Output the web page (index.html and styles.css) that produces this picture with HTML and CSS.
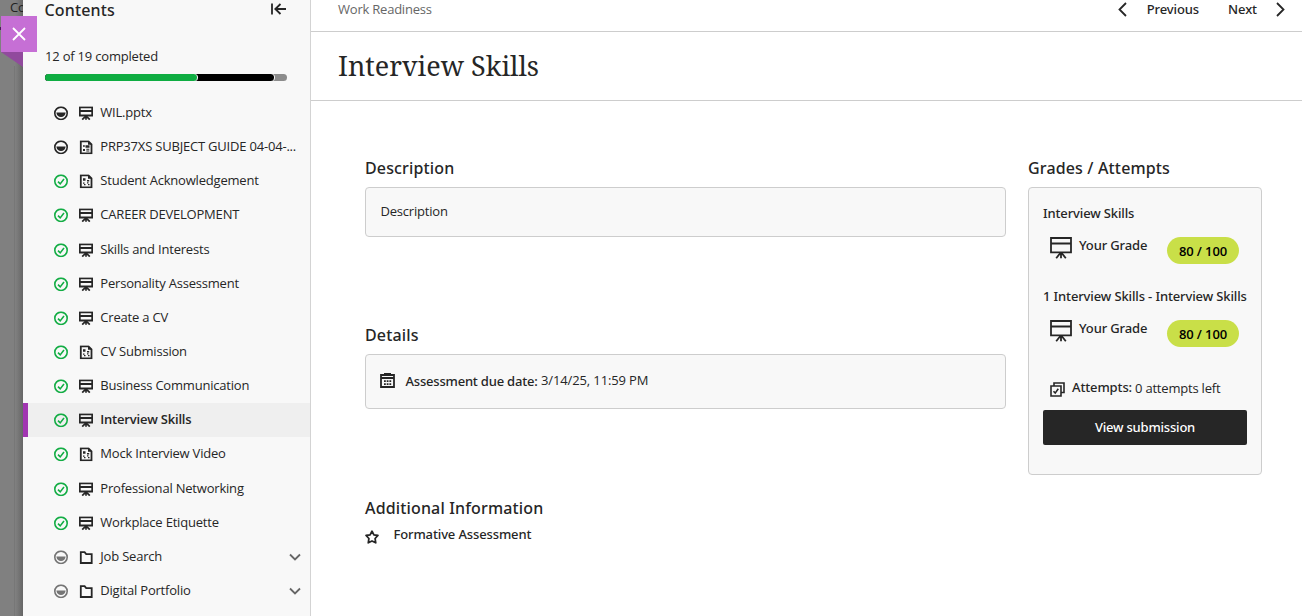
FILE: index.html
```
<!DOCTYPE html>
<html lang="en">
<head>
<meta charset="utf-8">
<title>Interview Skills</title>
<link rel="stylesheet" href="styles.css">
</head>
<body>
<svg class="defs" width="0" height="0" aria-hidden="true">
  <symbol id="done" viewBox="0 0 14 14"><circle cx="7" cy="7" r="6.2" fill="none" stroke="#14ad45" stroke-width="1.6"/><path d="M4 7.3 6.2 9.6 10 4.7" fill="none" stroke="#14ad45" stroke-width="1.6"/></symbol>
  <symbol id="half" viewBox="0 0 14 14"><circle cx="7" cy="7" r="6.2" fill="none" stroke="currentColor" stroke-width="1.6"/><path d="M2.4 6.2h9.2a4.6 4.6 0 0 1-9.2 0z" fill="currentColor"/></symbol>
  <symbol id="board" viewBox="0 0 14 14"><path d="M.8 1h12.4v8.2H.8zM.8 4.7h12.4" fill="none" stroke="currentColor" stroke-width="1.8"/><path d="M7 9v4.5M6.5 10 3.2 13.4M7.5 10l3.3 3.4" fill="none" stroke="currentColor" stroke-width="1.7"/></symbol>
  <symbol id="doc" viewBox="0 0 14 14"><path d="M1.8 1h7.7l3 3v9H1.8z" fill="none" stroke="currentColor" stroke-width="1.8"/><path d="M9 1v3.5h3.5z" fill="currentColor"/><path d="M4 5h1.8v1.5H4zM6.5 5h4v2.4h-4zM4 8.6h2v2.2H4zM7.3 8.5h3v1h-3zM7.3 10.2h3v1h-3z" fill="currentColor"/></symbol>
  <symbol id="test" viewBox="0 0 14 14"><path d="M1.8 1h7.7l3 3v9H1.8z" fill="none" stroke="currentColor" stroke-width="1.8"/><path d="M9 1v3.5h3.5z" fill="currentColor"/><path d="M4 4h2.5v2.5H4zM8 5.6h2.2v1.6H8zM4 8.2h1.5v1.3H4zM5 9.6h1.5V11H5zM8 8h1.5v1.3H8zM9 9.8h1.5V11H9z" fill="currentColor"/></symbol>
  <symbol id="folder" viewBox="0 0 14 14"><path d="M1.8 1.8h3.8l1.6 2h5.5v8.9H1.8z" fill="none" stroke="currentColor" stroke-width="1.8"/></symbol>
  <symbol id="chev" viewBox="0 0 12 8"><path d="M1 1.5 6 6.5l5-5" fill="none" stroke="#666" stroke-width="1.8"/></symbol>
  <symbol id="easel" viewBox="0 0 22 22"><path d="M1 1h20v14.4H1zM1 6.5h20" fill="none" stroke="currentColor" stroke-width="1.8"/><path d="M11 15v6.2M10.3 16 6.2 21.2M11.7 16l4.1 5.2" fill="none" stroke="currentColor" stroke-width="1.8"/></symbol>
</svg>

<div class="app">
  <div class="backdrop"><span class="behind-title">Co</span><span class="behind-mark"></span><span class="behind-line"></span>
  </div>
  <button class="close" aria-label="Close"><svg width="14" height="14" viewBox="0 0 14 14"><path d="M1 1l12 12M13 1 1 13" stroke="#fff" stroke-width="1.8" fill="none"/></svg></button>
  <span class="fold"></span>

  <aside class="sidebar">
    <header class="side-head">
      <h2>Contents</h2>
      <svg width="15" height="12" viewBox="0 0 15 12"><path d="M1 .5v11M4.5 6H15M9.5 1 4.3 6l5.2 5" fill="none" stroke="#262626" stroke-width="1.8"/></svg>
    </header>
    <p class="count">12 of 19 completed</p>
    <div class="bar"><span class="bar-left"></span><span class="bar-started"></span><span class="bar-done"></span></div>
    <ul class="items">
      <li><svg class="st"><use href="#half"/></svg><svg class="ty"><use href="#board"/></svg><span>WIL.pptx</span></li>
      <li><svg class="st"><use href="#half"/></svg><svg class="ty"><use href="#doc"/></svg><span>PRP37XS SUBJECT GUIDE 04-04-...</span></li>
      <li><svg class="st"><use href="#done"/></svg><svg class="ty"><use href="#test"/></svg><span>Student Acknowledgement</span></li>
      <li><svg class="st"><use href="#done"/></svg><svg class="ty"><use href="#board"/></svg><span>CAREER DEVELOPMENT</span></li>
      <li><svg class="st"><use href="#done"/></svg><svg class="ty"><use href="#board"/></svg><span>Skills and Interests</span></li>
      <li><svg class="st"><use href="#done"/></svg><svg class="ty"><use href="#board"/></svg><span>Personality Assessment</span></li>
      <li><svg class="st"><use href="#done"/></svg><svg class="ty"><use href="#board"/></svg><span>Create a CV</span></li>
      <li><svg class="st"><use href="#done"/></svg><svg class="ty"><use href="#test"/></svg><span>CV Submission</span></li>
      <li><svg class="st"><use href="#done"/></svg><svg class="ty"><use href="#board"/></svg><span>Business Communication</span></li>
      <li class="active"><svg class="st"><use href="#done"/></svg><svg class="ty"><use href="#board"/></svg><span>Interview Skills</span></li>
      <li><svg class="st"><use href="#done"/></svg><svg class="ty"><use href="#test"/></svg><span>Mock Interview Video</span></li>
      <li><svg class="st"><use href="#done"/></svg><svg class="ty"><use href="#board"/></svg><span>Professional Networking</span></li>
      <li><svg class="st"><use href="#done"/></svg><svg class="ty"><use href="#board"/></svg><span>Workplace Etiquette</span></li>
      <li><svg class="st grey"><use href="#half"/></svg><svg class="ty"><use href="#folder"/></svg><span>Job Search</span><svg class="chev"><use href="#chev"/></svg></li>
      <li><svg class="st grey"><use href="#half"/></svg><svg class="ty"><use href="#folder"/></svg><span>Digital Portfolio</span><svg class="chev"><use href="#chev"/></svg></li>
    </ul>
  </aside>

  <main class="main">
    <nav class="topbar">
      <span class="crumb">Work Readiness</span>
      <svg width="9" height="15" viewBox="0 0 9 15"><path d="M8 1 1.5 7.5 8 14" fill="none" stroke="#262626" stroke-width="1.8"/></svg>
      <span class="prev">Previous</span>
      <span class="next">Next</span>
      <svg width="9" height="15" viewBox="0 0 9 15"><path d="M1 1l6.5 6.5L1 14" fill="none" stroke="#262626" stroke-width="1.8"/></svg>
    </nav>
    <h1 class="title">Interview Skills</h1>
    <div class="content">
      <div class="info">
        <h3>Description</h3>
        <div class="box description">Description</div>
        <h3>Details</h3>
        <div class="box details">
          <svg width="15" height="15" viewBox="0 0 15 15"><path d="M1 2h13v12H1zM1 5h13" fill="none" stroke="#262626" stroke-width="1.8"/><path d="M4 0h7v2H4zM4 7.3h1.8V9H4zM6.7 7.3h1.8V9H6.7zM9.4 7.3h1.8V9H9.4zM4 10.3h1.8V12H4zM6.7 10.3h1.8V12H6.7zM9.4 10.3h1.8V12H9.4z" fill="#262626"/></svg>
          <b>Assessment due date:</b><span>3/14/25, 11:59 PM</span>
        </div>
        <h3>Additional Information</h3>
        <div class="formative">
          <svg width="14" height="14" viewBox="0 0 14 14"><path d="M7 1.2 8.9 4.9l4 .6-2.8 3 .6 4.3L7 11 3.3 12.8l.6-4.3-2.8-3 4-.6z" fill="none" stroke="#262626" stroke-width="1.8" stroke-linejoin="round"/></svg>
          <b>Formative Assessment</b>
        </div>
      </div>
      <section class="grades">
        <h3>Grades / Attempts</h3>
        <div class="box grade-card">
          <b class="name">Interview Skills</b>
          <div class="grade"><svg width="22" height="22"><use href="#easel"/></svg><b>Your Grade</b><span class="pill">80 / 100</span></div>
          <b class="name second">1 Interview Skills - Interview Skills</b>
          <div class="grade"><svg width="22" height="22"><use href="#easel"/></svg><b>Your Grade</b><span class="pill">80 / 100</span></div>
          <div class="attempts">
            <svg width="15" height="15" viewBox="0 0 15 15"><path d="M4 4V1h10v9.5h-3M1 4h10v10H1z" fill="none" stroke="#262626" stroke-width="1.6"/><path d="M3.5 9.3l1.7 1.8 3.1-4.4" fill="none" stroke="#262626" stroke-width="1.6"/></svg>
            <b>Attempts:</b><span>0 attempts left</span>
          </div>
          <button class="view">View submission</button>
        </div>
      </section>
    </div>
  </main>
</div>
</body>
</html>
```
FILE: styles.css
```
* { box-sizing: border-box; margin: 0; padding: 0; }
body { height: 616px; overflow: hidden; background: #fff; color: #262626; font: 13px/18px "Open Sans", "Noto Sans", sans-serif; letter-spacing: -.2px; }
b { font-family: "Noto Sans", "Open Sans", sans-serif; font-weight: 500; letter-spacing: -.13px; }
button { border: 0; font: inherit; letter-spacing: inherit; }
svg { display: block; flex: none; }
.defs { position: absolute; }
.app { position: relative; display: grid; grid-template-columns: 23px 288px 1fr; height: 616px; }

.backdrop { position: relative; overflow: hidden; background: linear-gradient(90deg, #808080 0 15px, #7b7b7b 17px, #666 23px); }
.behind-title { position: absolute; left: 10px; top: -2px; font-size: 13px; color: #222; }
.behind-mark { position: absolute; left: 0; top: 27px; width: 2px; height: 3px; background: #4c1b57; }
.behind-line { position: absolute; left: 14px; top: 66px; width: 1px; height: 550px; background: #777; }
.close { position: absolute; left: 1px; top: 16px; width: 36px; height: 36px; display: grid; place-items: center; background: #c66fd5; z-index: 2; }
.fold { position: absolute; left: 1px; top: 52px; width: 22px; height: 15px; background: #914a9d; clip-path: polygon(0 0, 100% 0, 100% 100%); }

.sidebar { background: #f8f8f8; border-right: 1px solid #d3d3d3; }
.side-head { display: flex; align-items: flex-start; justify-content: space-between; height: 47px; padding: 0 24px 0 21.5px; }
.side-head h2 { font: 500 16px/20px "Noto Sans", "Open Sans", sans-serif; letter-spacing: .15px; }
.side-head svg { margin-top: 3px; }
.count { padding-left: 22px; }
.bar { display: grid; margin: 9px 0 14.8px 22px; width: 242px; height: 7px; }
.bar span { grid-area: 1 / 1; height: 7px; border-radius: 4px; }
.bar-left { width: 242px; background: #8c8c8c; }
.bar-started { width: 229px; background: #000; box-shadow: 1px 0 0 #f8f8f8; }
.bar-done { width: 152px; background: #0fad42; box-shadow: 1px 0 0 #f8f8f8; }
.items { list-style: none; }
.items li { display: flex; align-items: center; height: 34.17px; padding: 0 9px 0 31px; white-space: nowrap; }
.items span { margin-top: -2px; flex: 1; }
.st { width: 14px; height: 14px; margin-right: 11px; }
.grey { color: #757575; }
.ty { width: 14px; height: 14px; margin-right: 7.3px; }
.st, .ty { transform: translateY(.3px); }
.chev { width: 12px; height: 8px; }
.items .active { background: #efefef; box-shadow: inset 5px 0 0 #a135b1; font-weight: 600; }

.topbar { display: flex; align-items: center; height: 32px; padding: 0 17px 12px 27px; border-bottom: 1px solid #cdcdcd; font-family: "Noto Sans", "Open Sans", sans-serif; font-weight: 500; letter-spacing: -.1px; }
.topbar span { margin-top: -1px; }
.topbar .crumb { flex: 1; color: #666; font-family: "Open Sans", "Noto Sans", sans-serif; font-weight: 400; letter-spacing: -.22px; }
.topbar .prev { margin: -1px 29px 0 20px; }
.topbar .next { margin-right: 19px; }
.title { height: 69px; padding: 15px 27px 0; border-bottom: 1px solid #cdcdcd; font: 400 27px/38px "Noto Serif", "DejaVu Serif Condensed", "DejaVu Serif", serif; letter-spacing: 0; }
.content { display: grid; grid-template-columns: 641px 234px; column-gap: 22px; padding: 56px 0 0 54px; }
h3 { font: 500 16px/22px "Noto Sans", "Open Sans", sans-serif; letter-spacing: .15px; margin-bottom: 8px; }
.box { background: #f8f8f8; border: 1px solid #cdcdcd; border-radius: 4px; }
.description { height: 50px; padding: 14px 14.5px; margin-bottom: 87px; }
.details { display: flex; align-items: center; height: 55px; padding: 0 14px 2px; margin-bottom: 88px; letter-spacing: -.2px; }
.details b { margin: 0 3.5px 0 10.5px; letter-spacing: -.2px; }
.details span { margin-top: -1px; letter-spacing: -.13px; }
.formative { display: flex; margin-top: -2px; }
.formative svg { margin-top: 5px; }
.formative b { margin-left: 14.5px; }
.grade-card { height: 288px; padding: 16px 14px; }
.name { display: block; white-space: nowrap; }
.second { margin-top: 23px; }
.grade { display: flex; padding: 15px 0 0 7px; height: 42px; }
.grade b { width: 88px; margin: -1px 0 0 7px; }
.pill { width: 72px; height: 27px; border-radius: 14px; background: #c9df48; color: #000; text-align: center; font-weight: 600; line-height: 28px; letter-spacing: -.1px; }
.attempts { display: flex; margin: 32px 0 0 7px; }
.attempts svg { margin-top: 3px; }
.attempts b { margin: -1px 3px 0 7px; }
.view { display: block; width: 204px; height: 35px; margin-top: 13px; padding-bottom: 2px; border-radius: 2px; background: #262626; color: #fff; font: 500 13px/18px "Noto Sans", "Open Sans", sans-serif; }
```
